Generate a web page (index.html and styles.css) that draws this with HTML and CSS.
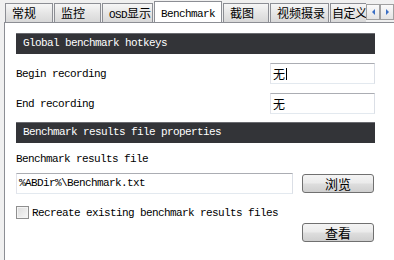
FILE: index.html
```html
<!DOCTYPE html>
<html lang="zh">
<head>
    <meta charset="UTF-8">
    <meta name="viewport" content="width=device-width, initial-scale=1.0">
    <title>Benchmark</title>
    <link rel="stylesheet" href="styles.css">
</head>
<body>
    <div class="tabbar">
        <div class="tabs">
            <div class="tab w48">常规</div>
            <div class="tab w47">监控</div>
            <div class="tab w51"><span class="mono">OSD</span>显示</div>
            <div class="tab active w68"><span class="mono">Benchmark</span></div>
            <div class="tab w46">截图</div>
            <div class="tab w59">视频摄录</div>
            <div class="tab w39 tight">自定义</div>
        </div>
        <div class="arrows">
            <span class="arrow"><span class="tri left"></span></span>
            <span class="arrow"><span class="tri right"></span></span>
        </div>
    </div>

    <div class="panel">
        <div class="bar">Global benchmark hotkeys</div>

        <div class="row first">
            <span class="label">Begin recording</span>
            <div class="field short">无<span class="caret"></span></div>
        </div>
        <div class="row">
            <span class="label">End recording</span>
            <div class="field short">无</div>
        </div>

        <div class="bar second">Benchmark results file properties</div>

        <div class="label plain">Benchmark results file</div>
        <div class="row file">
            <div class="field long mono">%ABDir%\Benchmark.txt</div>
            <button class="btn">浏览</button>
        </div>

        <label class="check"><span class="box"></span>Recreate existing benchmark results files</label>

        <div class="row end">
            <button class="btn">查看</button>
        </div>
    </div>
</body>
</html>
```

FILE: styles.css
```css
body {
    margin: 0;
    width: 394px;
    height: 260px;
    overflow: hidden;
    background: #f0f0f0;
    font-family: "Liberation Mono", "DejaVu Sans Mono", monospace;
    font-size: 11px;
    letter-spacing: -0.6px;
    color: #000;
}
.mono {
    font-family: "Liberation Mono", "DejaVu Sans Mono", monospace;
    letter-spacing: -0.6px;
}

/* tabs */
.tabbar {
    display: flex;
    height: 22px;
    padding-left: 5px;
}
.tabs {
    display: flex;
    align-items: flex-end;
    gap: 1px;
    width: 365px;
    overflow: hidden;
    position: relative;
    z-index: 2;
}
.tab {
    flex: none;
    box-sizing: border-box;
    height: 19px;
    border: 1px solid #8c8e94;
    border-bottom: none;
    background: linear-gradient(#f6f6f6, #e6e6e6 50%, #d8d8d8);
    font-family: "Noto Sans CJK SC", sans-serif;
    font-size: 12px;
    letter-spacing: 0;
    line-height: 17px;
    padding-left: 6px;
    white-space: nowrap;
}
.tab.tight {
    padding-left: 1px;
    border-right: none;
    letter-spacing: -0.5px;
}
.tab.active {
    height: 22px;
    margin-bottom: -1px;
    background: #fff;
    line-height: 19px;
    padding-left: 6px;
}
.tab .mono { font-size: 11px; }
.w48 { width: 48px; }
.w47 { width: 47px; }
.w51 { width: 51px; }
.w68 { width: 68px; }
.w46 { width: 46px; }
.w59 { width: 59px; }
.w39 { width: 39px; }

.arrows {
    display: flex;
    padding-top: 4px;
}
.arrow {
    box-sizing: border-box;
    width: 14px;
    height: 16px;
    border: 1px solid #a0a0a0;
    background: linear-gradient(#fafafa, #e4e4e4);
    display: flex;
    align-items: center;
    justify-content: center;
}
.tri {
    width: 0;
    height: 0;
    border-top: 3px solid transparent;
    border-bottom: 3px solid transparent;
}
.tri.left { border-right: 3px solid #3a6fc4; }
.tri.right { border-left: 3px solid #3a6fc4; }

/* panel */
.panel {
    margin-left: 4px;
    height: 238px;
    background: #fff;
    border-top: 1px solid #8c8e94;
    border-left: 1px solid #8c8e94;
    padding: 10px 0 0 11px;
    box-sizing: border-box;
}
.bar {
    width: 359px;
    height: 21px;
    box-sizing: border-box;
    background: #333438;
    border-top: 1px solid #6a6b70;
    color: #fff;
    line-height: 19px;
    padding-left: 7px;
}
.bar.second { margin-top: 8px; }

.row {
    display: flex;
    align-items: center;
    justify-content: space-between;
    width: 359px;
    margin-top: 9px;
}
.row.first { margin-top: 9px; }
.label.plain {
    margin-top: 9px;
    height: 14px;
    line-height: 14px;
}
.row.file { margin-top: 7px; }
.row.end {
    justify-content: flex-end;
    margin-top: 4px;
    padding-right: 1px;
}

.field {
    box-sizing: border-box;
    height: 21px;
    border: 1px solid;
    border-color: #abadb3 #dbdfe6 #e3e9ef #e2e3ea;
    background: #fff;
    line-height: 19px;
    padding-left: 2px;
    display: flex;
    align-items: center;
}
.field.short {
    width: 105px;
    font-family: "Noto Sans CJK SC", sans-serif;
    font-size: 12px;
    letter-spacing: 0;
}
.field.long {
    width: 277px;
    font-size: 11px;
}
.caret {
    width: 1px;
    height: 12px;
    background: #000;
    margin-left: 1px;
}

.btn {
    box-sizing: border-box;
    width: 72px;
    height: 19px;
    margin-right: 1px;
    border: 1px solid #707070;
    border-radius: 3px;
    background: linear-gradient(#f4f4f4, #ebebeb 45%, #dddddd 55%, #cfcfcf);
    font-family: "Noto Sans CJK SC", sans-serif;
    font-size: 13px;
    line-height: 15px;
    padding: 0;
    color: #000;
}

.check {
    display: flex;
    align-items: center;
    margin-top: 12px;
    height: 13px;
}
.box {
    box-sizing: border-box;
    width: 13px;
    height: 13px;
    border: 1px solid #8f8f8f;
    background: linear-gradient(135deg, #dcdcdc, #f8f8f8);
    box-shadow: inset 0 0 0 1px #f4f4f4;
    margin-right: 3px;
}
```
